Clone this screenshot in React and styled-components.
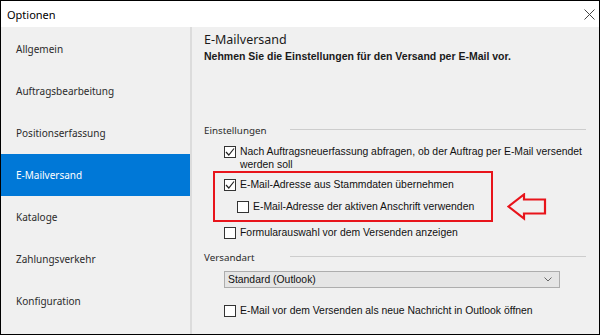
import styled, { createGlobalStyle } from "styled-components";

const GlobalStyle = createGlobalStyle`
  html, body {
    margin: 0;
    padding: 0;
    background: #ffffff;
  }
  * {
    box-sizing: border-box;
  }
`;

const navItems = [
  "Allgemein",
  "Auftragsbearbeitung",
  "Positionserfassung",
  "E-Mailversand",
  "Kataloge",
  "Zahlungsverkehr",
  "Konfiguration",
];

function CloseIcon() {
  return (
    <svg width="11" height="11" viewBox="0 0 11 11">
      <path d="M0.5 0.5 L10.5 10.5 M10.5 0.5 L0.5 10.5" stroke="#444" strokeWidth="1" />
    </svg>
  );
}

function CheckMark() {
  return (
    <svg width="10" height="10" viewBox="0 0 10 10">
      <path d="M1 5 L3.8 8 L9 1.5" fill="none" stroke="#222" strokeWidth="1.2" />
    </svg>
  );
}

function Chevron() {
  return (
    <svg width="8" height="5" viewBox="0 0 8 5">
      <path d="M0.5 0.5 L4 4 L7.5 0.5" fill="none" stroke="#666" strokeWidth="1" />
    </svg>
  );
}

function Arrow() {
  return (
    <svg width="40" height="28" viewBox="0 0 40 28">
      <path
        d="M1.5 13.5 L17 1.5 L17 6.5 L38 6.5 L38 20.5 L17 20.5 L17 25.5 Z"
        fill="none"
        stroke="#e8141b"
        strokeWidth="2.2"
      />
    </svg>
  );
}

function Option({ checked, indent, top, children }) {
  return (
    <OptionRow indent={indent} top={top}>
      <Box>{checked && <CheckMark />}</Box>
      <OptionLabel>{children}</OptionLabel>
    </OptionRow>
  );
}

export default function App() {
  return (
    <>
      <GlobalStyle />
      <Window>
        <TitleBar>
          <Title>Optionen</Title>
          <CloseButton>
            <CloseIcon />
          </CloseButton>
        </TitleBar>
        <Body>
          <Sidebar>
            {navItems.map((item) => (
              <NavItem key={item} active={item === "E-Mailversand"}>
                {item}
              </NavItem>
            ))}
          </Sidebar>
          <Content>
            <Heading>E-Mailversand</Heading>
            <Subtitle>Nehmen Sie die Einstellungen für den Versand per E-Mail vor.</Subtitle>

            <GroupHeader top={60}>
              <GroupLabel>Einstellungen</GroupLabel>
              <GroupLine />
            </GroupHeader>

            <Option checked top={6}>
              {"Nach Auftragsneuerfassung abfragen, ob der Auftrag per E-Mail versendet\nwerden soll"}
            </Option>

            <HighlightArea>
              <Highlight>
                <Option checked top={5}>
                  E-Mail-Adresse aus Stammdaten übernehmen
                </Option>
                <Option indent top={9}>
                  E-Mail-Adresse der aktiven Anschrift verwenden
                </Option>
              </Highlight>
              <ArrowWrap>
                <Arrow />
              </ArrowWrap>
            </HighlightArea>

            <Option top={4}>Formularauswahl vor dem Versenden anzeigen</Option>

            <GroupHeader top={11}>
              <GroupLabel>Versandart</GroupLabel>
              <GroupLine />
            </GroupHeader>

            <Select>
              <span>Standard (Outlook)</span>
              <Chevron />
            </Select>

            <Option top={16}>E-Mail vor dem Versenden als neue Nachricht in Outlook öffnen</Option>
          </Content>
        </Body>
      </Window>
    </>
  );
}

const Window = styled.div`
  width: 600px;
  height: 335px;
  border: 1px solid #000;
  display: flex;
  flex-direction: column;
  font-family: "Noto Sans", "Open Sans", sans-serif;
  color: #1a1a1a;
  overflow: hidden;
`;

const TitleBar = styled.div`
  flex: none;
  height: 26px;
  background: #ffffff;
  display: flex;
  align-items: center;
  justify-content: space-between;
  padding: 0 3px 0 6px;
`;

const Title = styled.div`
  font-size: 11px;
  color: #000;
`;

const CloseButton = styled.div`
  width: 14px;
  display: flex;
  align-items: center;
  justify-content: center;
`;

const Body = styled.div`
  flex: 1;
  min-height: 0;
  display: flex;
  background: #f0f0f0;
`;

const Sidebar = styled.div`
  flex: none;
  width: 191px;
  border-right: 2px solid #dcdcdc;
  display: flex;
  flex-direction: column;
  padding-top: 1px;
`;

const NavItem = styled.div`
  flex: none;
  height: 42px;
  display: flex;
  align-items: center;
  padding-left: 15px;
  font-size: 10px;
  color: ${({ active }) => (active ? "#ffffff" : "#2b2b2b")};
  background: ${({ active }) => (active ? "#0078d7" : "transparent")};
`;

const Content = styled.div`
  flex: 1;
  min-width: 0;
  display: flex;
  flex-direction: column;
  padding: 4px 13px 0 12px;
`;

const Heading = styled.div`
  font-size: 12.5px;
  line-height: 18px;
  color: #1a1a1a;
`;

const Subtitle = styled.div`
  font-family: "Liberation Sans", Arial, sans-serif;
  font-size: 10.5px;
  font-weight: bold;
  line-height: 14px;
  color: #1a1a1a;
`;

const GroupHeader = styled.div`
  flex: none;
  display: flex;
  gap: 14px;
  margin-top: ${({ top }) => top}px;
  height: 16px;
`;

const GroupLabel = styled.div`
  font-size: 9.8px;
  line-height: 16px;
  width: 72px;
  white-space: nowrap;
  color: #2b2b2b;
`;

const GroupLine = styled.div`
  flex: 1;
  height: 1px;
  margin-top: 6px;
  background: #cdcdcd;
`;

const OptionRow = styled.div`
  flex: none;
  display: flex;
  align-items: flex-start;
  gap: 4px;
  margin-left: ${({ indent }) => (indent ? 22 : 20)}px;
  margin-top: ${({ top }) => top || 0}px;
`;

const Box = styled.div`
  width: 12px;
  height: 12px;
  flex: none;
  margin-top: 1px;
  border: 1px solid #333;
  background: #ffffff;
  display: flex;
  align-items: center;
  justify-content: center;
`;

const OptionLabel = styled.div`
  font-family: "Liberation Sans", Arial, sans-serif;
  font-size: 10.4px;
  line-height: 13px;
  color: #111;
  white-space: pre;
`;

const HighlightArea = styled.div`
  flex: none;
  display: flex;
  align-items: flex-start;
  gap: 14px;
`;

const Highlight = styled.div`
  width: 280px;
  height: 51px;
  margin-left: 9px;
  border: 2px solid #e8141b;
  display: flex;
  flex-direction: column;

  ${OptionRow} {
    margin-left: 9px;
  }
  ${OptionRow}:last-child {
    margin-left: 22px;
  }
`;

const ArrowWrap = styled.div`
  display: flex;
  margin-top: 22px;
`;

const Select = styled.div`
  flex: none;
  margin: 5px 26px 0 20px;
  height: 17px;
  border: 1px solid #adadad;
  background: #e5e5e5;
  display: flex;
  align-items: center;
  justify-content: space-between;
  padding: 0 7px 0 3px;
  font-family: "Liberation Sans", Arial, sans-serif;
  font-size: 10.4px;
  color: #111;
`;
